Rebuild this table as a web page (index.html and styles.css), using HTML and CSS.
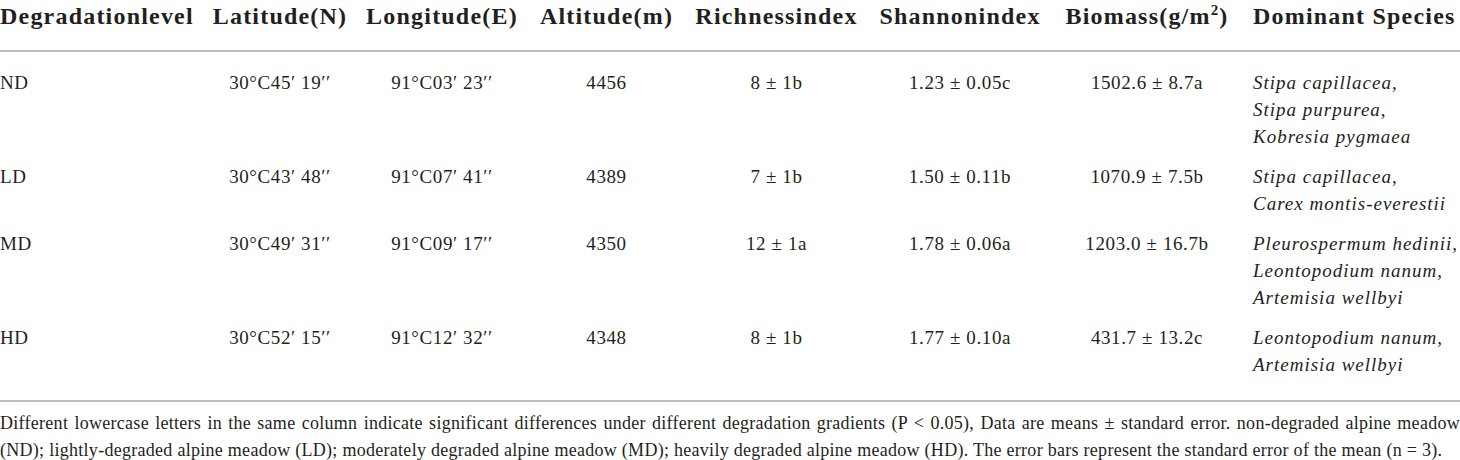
FILE: index.html
```html
<!DOCTYPE html>
<html lang="en">

<head>
    <meta charset="UTF-8">
    <title>Degradation levels</title>
    <link rel="stylesheet" href="styles.css">
</head>

<body>
    <main class="contenedor">
        <table class="tabla">
            <colgroup>
                <col class="c-level">
                <col class="c-lat">
                <col class="c-lon">
                <col class="c-alt">
                <col class="c-rich">
                <col class="c-shan">
                <col class="c-bio">
                <col class="c-dom">
            </colgroup>
            <thead>
                <tr>
                    <th>Degradationlevel</th>
                    <th>Latitude(N)</th>
                    <th>Longitude(E)</th>
                    <th>Altitude(m)</th>
                    <th>Richnessindex</th>
                    <th>Shannonindex</th>
                    <th>Biomass(g/m<sup>2</sup>)</th>
                    <th>Dominant Species</th>
                </tr>
            </thead>
            <tbody>
                <tr>
                    <td>ND</td>
                    <td>30°C45′ 19′′</td>
                    <td>91°C03′ 23′′</td>
                    <td>4456</td>
                    <td>8 ± 1b</td>
                    <td>1.23 ± 0.05c</td>
                    <td>1502.6 ± 8.7a</td>
                    <td><i>Stipa capillacea</i>,<br><i>Stipa purpurea</i>,<br><i>Kobresia pygmaea</i></td>
                </tr>
                <tr>
                    <td>LD</td>
                    <td>30°C43′ 48′′</td>
                    <td>91°C07′ 41′′</td>
                    <td>4389</td>
                    <td>7 ± 1b</td>
                    <td>1.50 ± 0.11b</td>
                    <td>1070.9 ± 7.5b</td>
                    <td><i>Stipa capillacea</i>,<br><i>Carex montis-everestii</i></td>
                </tr>
                <tr>
                    <td>MD</td>
                    <td>30°C49′ 31′′</td>
                    <td>91°C09′ 17′′</td>
                    <td>4350</td>
                    <td>12 ± 1a</td>
                    <td>1.78 ± 0.06a</td>
                    <td>1203.0 ± 16.7b</td>
                    <td><i>Pleurospermum hedinii</i>,<br><i>Leontopodium nanum</i>,<br><i>Artemisia wellbyi</i></td>
                </tr>
                <tr>
                    <td>HD</td>
                    <td>30°C52′ 15′′</td>
                    <td>91°C12′ 32′′</td>
                    <td>4348</td>
                    <td>8 ± 1b</td>
                    <td>1.77 ± 0.10a</td>
                    <td>431.7 ± 13.2c</td>
                    <td><i>Leontopodium nanum</i>,<br><i>Artemisia wellbyi</i></td>
                </tr>
            </tbody>
        </table>
        <p class="nota">Different lowercase letters in the same column indicate significant differences under different degradation gradients (P &lt; 0.05), Data are means ± standard error. non-degraded alpine meadow (ND); lightly-degraded alpine meadow (LD); moderately degraded alpine meadow (MD); heavily degraded alpine meadow (HD). The error bars represent the standard error of the mean (n = 3).</p>
    </main>
</body>

</html>
```

FILE: styles.css
```css
body {
    margin: 0;
    font-family: 'Liberation Serif', 'Times New Roman', serif;
    color: #231f20;
    background: white;
}

.contenedor {
    width: 1460px;
}

.tabla {
    width: 1460px;
    table-layout: fixed;
    border-collapse: collapse;
}

.c-level { width: 204px; }
.c-lat { width: 152px; }
.c-lon { width: 172px; }
.c-alt { width: 157px; }
.c-rich { width: 183px; }
.c-shan { width: 184px; }
.c-bio { width: 190px; }
.c-dom { width: 218px; }

.tabla th {
    font-size: 24px;
    font-weight: bold;
    letter-spacing: 1.2px;
    line-height: 27px;
    padding: 3px 0 20px;
    text-align: center;
    white-space: nowrap;
    border-bottom: 2px solid #bcbcbc;
}

.tabla th sup {
    font-size: 15px;
    line-height: 0;
}

.tabla td {
    font-size: 19px;
    letter-spacing: 0.6px;
    line-height: 27px;
    padding: 6px 0 7px;
    text-align: center;
    vertical-align: top;
    white-space: nowrap;
}

.tabla td i {
    letter-spacing: 1px;
}

.tabla th:first-child,
.tabla td:first-child {
    text-align: left;
}

.tabla th:last-child,
.tabla td:last-child {
    text-align: left;
    padding-left: 11px;
}

.tabla tbody tr:first-child td {
    padding-top: 17px;
}

.tabla tbody tr:last-child td {
    padding-bottom: 22px;
    border-bottom: 2px solid #bcbcbc;
}

.nota {
    margin: 8px 0 0;
    font-size: 18px;
    letter-spacing: 0.28px;
    line-height: 27px;
    text-align: justify;
}
```
